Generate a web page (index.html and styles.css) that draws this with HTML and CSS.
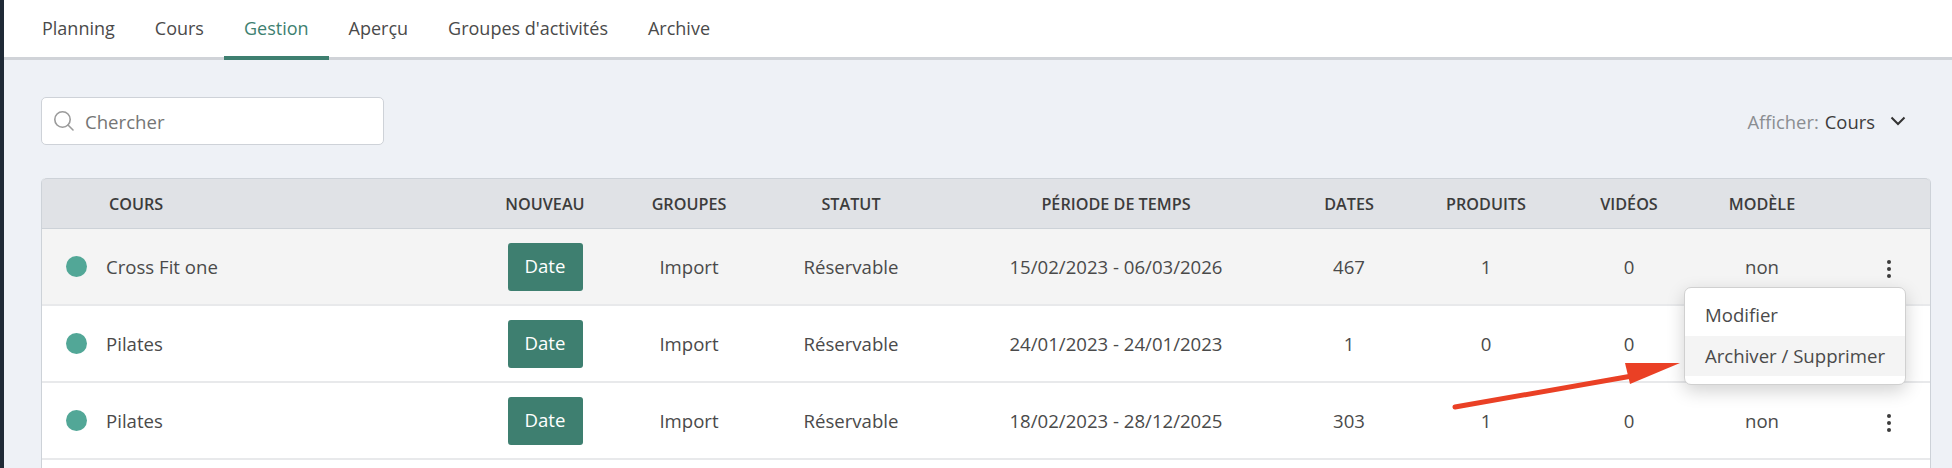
FILE: index.html
```html
<!DOCTYPE html>
<html lang="fr">

<head>
    <meta charset="UTF-8">
    <title>Gestion</title>
    <link rel="stylesheet" href="styles.css">
</head>

<body>
    <div class="sidebar-edge"></div>
    <div class="page">
        <nav class="tabs">
            <a class="tab">Planning</a>
            <a class="tab">Cours</a>
            <a class="tab active">Gestion</a>
            <a class="tab">Aperçu</a>
            <a class="tab">Groupes d'activités</a>
            <a class="tab">Archive</a>
        </nav>

        <main class="content">
            <div class="toolbar">
                <div class="search">
                    <svg class="search-icon" width="22" height="22" viewBox="0 0 22 22">
                        <circle cx="9.5" cy="9.5" r="7.7" />
                        <path d="M15 15l5 5" />
                    </svg>
                    <span class="search-text">Chercher</span>
                </div>
                <div class="show-filter">
                    <span class="show-label">Afficher:</span>
                    <span class="show-value">Cours</span>
                    <svg class="chevron" width="16" height="10" viewBox="0 0 16 10">
                        <path d="M1.5 1.5L8 8l6.5-6.5" />
                    </svg>
                </div>
            </div>

            <div class="table-wrap">
                <table class="courses">
                    <thead>
                        <tr>
                            <th class="col-name">Cours</th>
                            <th class="col-new">Nouveau</th>
                            <th class="col-groups">Groupes</th>
                            <th class="col-status">Statut</th>
                            <th class="col-period">Période de temps</th>
                            <th class="col-dates">Dates</th>
                            <th class="col-products">Produits</th>
                            <th class="col-videos">Vidéos</th>
                            <th class="col-model">Modèle</th>
                            <th class="col-actions"></th>
                        </tr>
                    </thead>
                    <tbody>
                        <tr class="hovered">
                            <td class="col-name"><span class="dot"></span>Cross Fit one</td>
                            <td><span class="btn">Date</span></td>
                            <td>Import</td>
                            <td>Réservable</td>
                            <td>15/02/2023 - 06/03/2026</td>
                            <td>467</td>
                            <td>1</td>
                            <td>0</td>
                            <td>non</td>
                            <td class="col-actions"><span class="kebab"><i></i><i></i><i></i></span></td>
                        </tr>
                        <tr>
                            <td class="col-name"><span class="dot"></span>Pilates</td>
                            <td><span class="btn">Date</span></td>
                            <td>Import</td>
                            <td>Réservable</td>
                            <td>24/01/2023 - 24/01/2023</td>
                            <td>1</td>
                            <td>0</td>
                            <td>0</td>
                            <td></td>
                            <td class="col-actions"></td>
                        </tr>
                        <tr>
                            <td class="col-name"><span class="dot"></span>Pilates</td>
                            <td><span class="btn">Date</span></td>
                            <td>Import</td>
                            <td>Réservable</td>
                            <td>18/02/2023 - 28/12/2025</td>
                            <td>303</td>
                            <td>1</td>
                            <td>0</td>
                            <td>non</td>
                            <td class="col-actions"><span class="kebab"><i></i><i></i><i></i></span></td>
                        </tr>
                        <tr class="cut-row">
                            <td colspan="10"></td>
                        </tr>
                    </tbody>
                </table>

                <div class="menu">
                    <div class="menu-item">Modifier</div>
                    <div class="menu-item selected">Archiver / Supprimer</div>
                </div>

                <!-- annotation arrow from the screenshot -->
                <svg class="arrow" width="240" height="60" viewBox="0 0 240 60">
                    <path class="arrow-line" d="M3 48L180 17" />
                    <path class="arrow-head" d="M173 4L228 4L178 25z" />
                </svg>
            </div>
        </main>
    </div>
</body>

</html>
```

FILE: styles.css
```css
* {
    box-sizing: border-box;
}

body {
    margin: 0;
    height: 100vh;
    overflow: hidden;
    display: flex;
    font-family: "Open Sans", Arial, sans-serif;
    font-size: 18.6px;
    color: #4a4a4a;
    background-color: #eef1f6;
}

.sidebar-edge {
    width: 4px;
    flex-shrink: 0;
    background-color: #1f2a36;
}

.page {
    flex: 1;
    min-width: 0;
}

.tabs {
    display: flex;
    height: 60px;
    padding-left: 18px;
    background-color: #ffffff;
    border-bottom: 3px solid #d0d3d8;
}

.tab {
    height: 60px;
    padding: 0 20px;
    font-size: 18px;
    line-height: 57px;
    color: #4a4a4a;
    border-radius: 3px 3px 0 0;
}

.tab.active {
    color: #3e7f70;
    border-bottom: 4px solid #3e7f70;
}

.content {
    padding: 37px 21px 0 37px;
}

.toolbar {
    display: flex;
    justify-content: space-between;
    align-items: center;
    height: 48px;
}

.search {
    display: flex;
    align-items: center;
    width: 343px;
    height: 48px;
    padding-left: 11px;
    background-color: #ffffff;
    border: 1px solid #ced2d8;
    border-radius: 5px;
}

.search-icon {
    fill: none;
    stroke: #9b9b9b;
    stroke-width: 1.6;
    stroke-linecap: round;
}

.search-text {
    margin-left: 10px;
    color: #757575;
    font-size: 18.6px;
}

.show-filter {
    display: flex;
    align-items: center;
    padding-right: 25px;
    font-size: 18.4px;
}

.show-label {
    color: #8a8d91;
}

.show-value {
    margin-left: 6px;
    color: #3c3c3c;
}

.chevron {
    margin-left: 15px;
    fill: none;
    stroke: #333333;
    stroke-width: 2;
}

.table-wrap {
    position: relative;
    margin-top: 33px;
}

.courses {
    width: 100%;
    table-layout: fixed;
    border-collapse: separate;
    border-spacing: 0;
    background-color: #ffffff;
    border-left: 1px solid #cdd2d8;
    border-right: 1px solid #cdd2d8;
    border-radius: 5px 5px 0 0;
}

.courses th {
    height: 51px;
    padding: 0;
    font-size: 16.2px;
    font-weight: 600;
    text-transform: uppercase;
    color: #3c3c3c;
    background-color: #e0e2e6;
    border-top: 1px solid #cdd2d8;
    border-bottom: 1px solid #cdd2d8;
}

.courses th:first-child {
    border-top-left-radius: 5px;
}

.courses th:last-child {
    border-top-right-radius: 5px;
}

.courses td {
    height: 77px;
    padding: 0;
    text-align: center;
    border-bottom: 2px solid #e8e9eb;
}

.courses .cut-row td {
    height: 8px;
    border-bottom: none;
}

.hovered td {
    background-color: #f4f4f4;
}

.courses .col-name {
    width: 428px;
    text-align: left;
}

.courses th.col-name {
    padding-left: 67px;
}

.courses td.col-name {
    display: flex;
    align-items: center;
    padding-left: 24px;
}

.col-new {
    width: 150px;
}

.col-groups {
    width: 138px;
}

.col-status {
    width: 186px;
}

.col-period {
    width: 344px;
}

.col-dates {
    width: 122px;
}

.col-products {
    width: 152px;
}

.col-videos {
    width: 134px;
}

.col-model {
    width: 132px;
}

.courses .col-actions {
    padding-left: 20px;
}

.dot {
    width: 21px;
    height: 21px;
    margin-right: 19px;
    border-radius: 50%;
    background-color: #52a797;
}

.btn {
    display: inline-block;
    width: 75px;
    height: 48px;
    line-height: 46px;
    color: #ffffff;
    background-color: #3e7f70;
    border-radius: 3px;
    vertical-align: middle;
}

.kebab {
    display: inline-flex;
    flex-direction: column;
    gap: 3.2px;
    vertical-align: middle;
}

.kebab i {
    width: 4.2px;
    height: 4.2px;
    border-radius: 50%;
    background-color: #3c3c3c;
}

.menu {
    position: absolute;
    top: 109px;
    right: 25px;
    width: 222px;
    padding: 8px 0;
    background-color: #ffffff;
    border: 1px solid #d0d0d0;
    border-radius: 7px;
    box-shadow: 0 6px 18px rgba(0, 0, 0, 0.18);
}

.menu-item {
    height: 40px;
    padding-left: 20px;
    line-height: 37px;
}

.menu-item.selected {
    background-color: #f4f4f4;
    line-height: 39px;
}

.arrow {
    position: absolute;
    top: 181px;
    left: 1411px;
}

.arrow-line {
    fill: none;
    stroke: #ea4025;
    stroke-width: 5;
    stroke-linecap: round;
}

.arrow-head {
    fill: #ea4025;
}
```
